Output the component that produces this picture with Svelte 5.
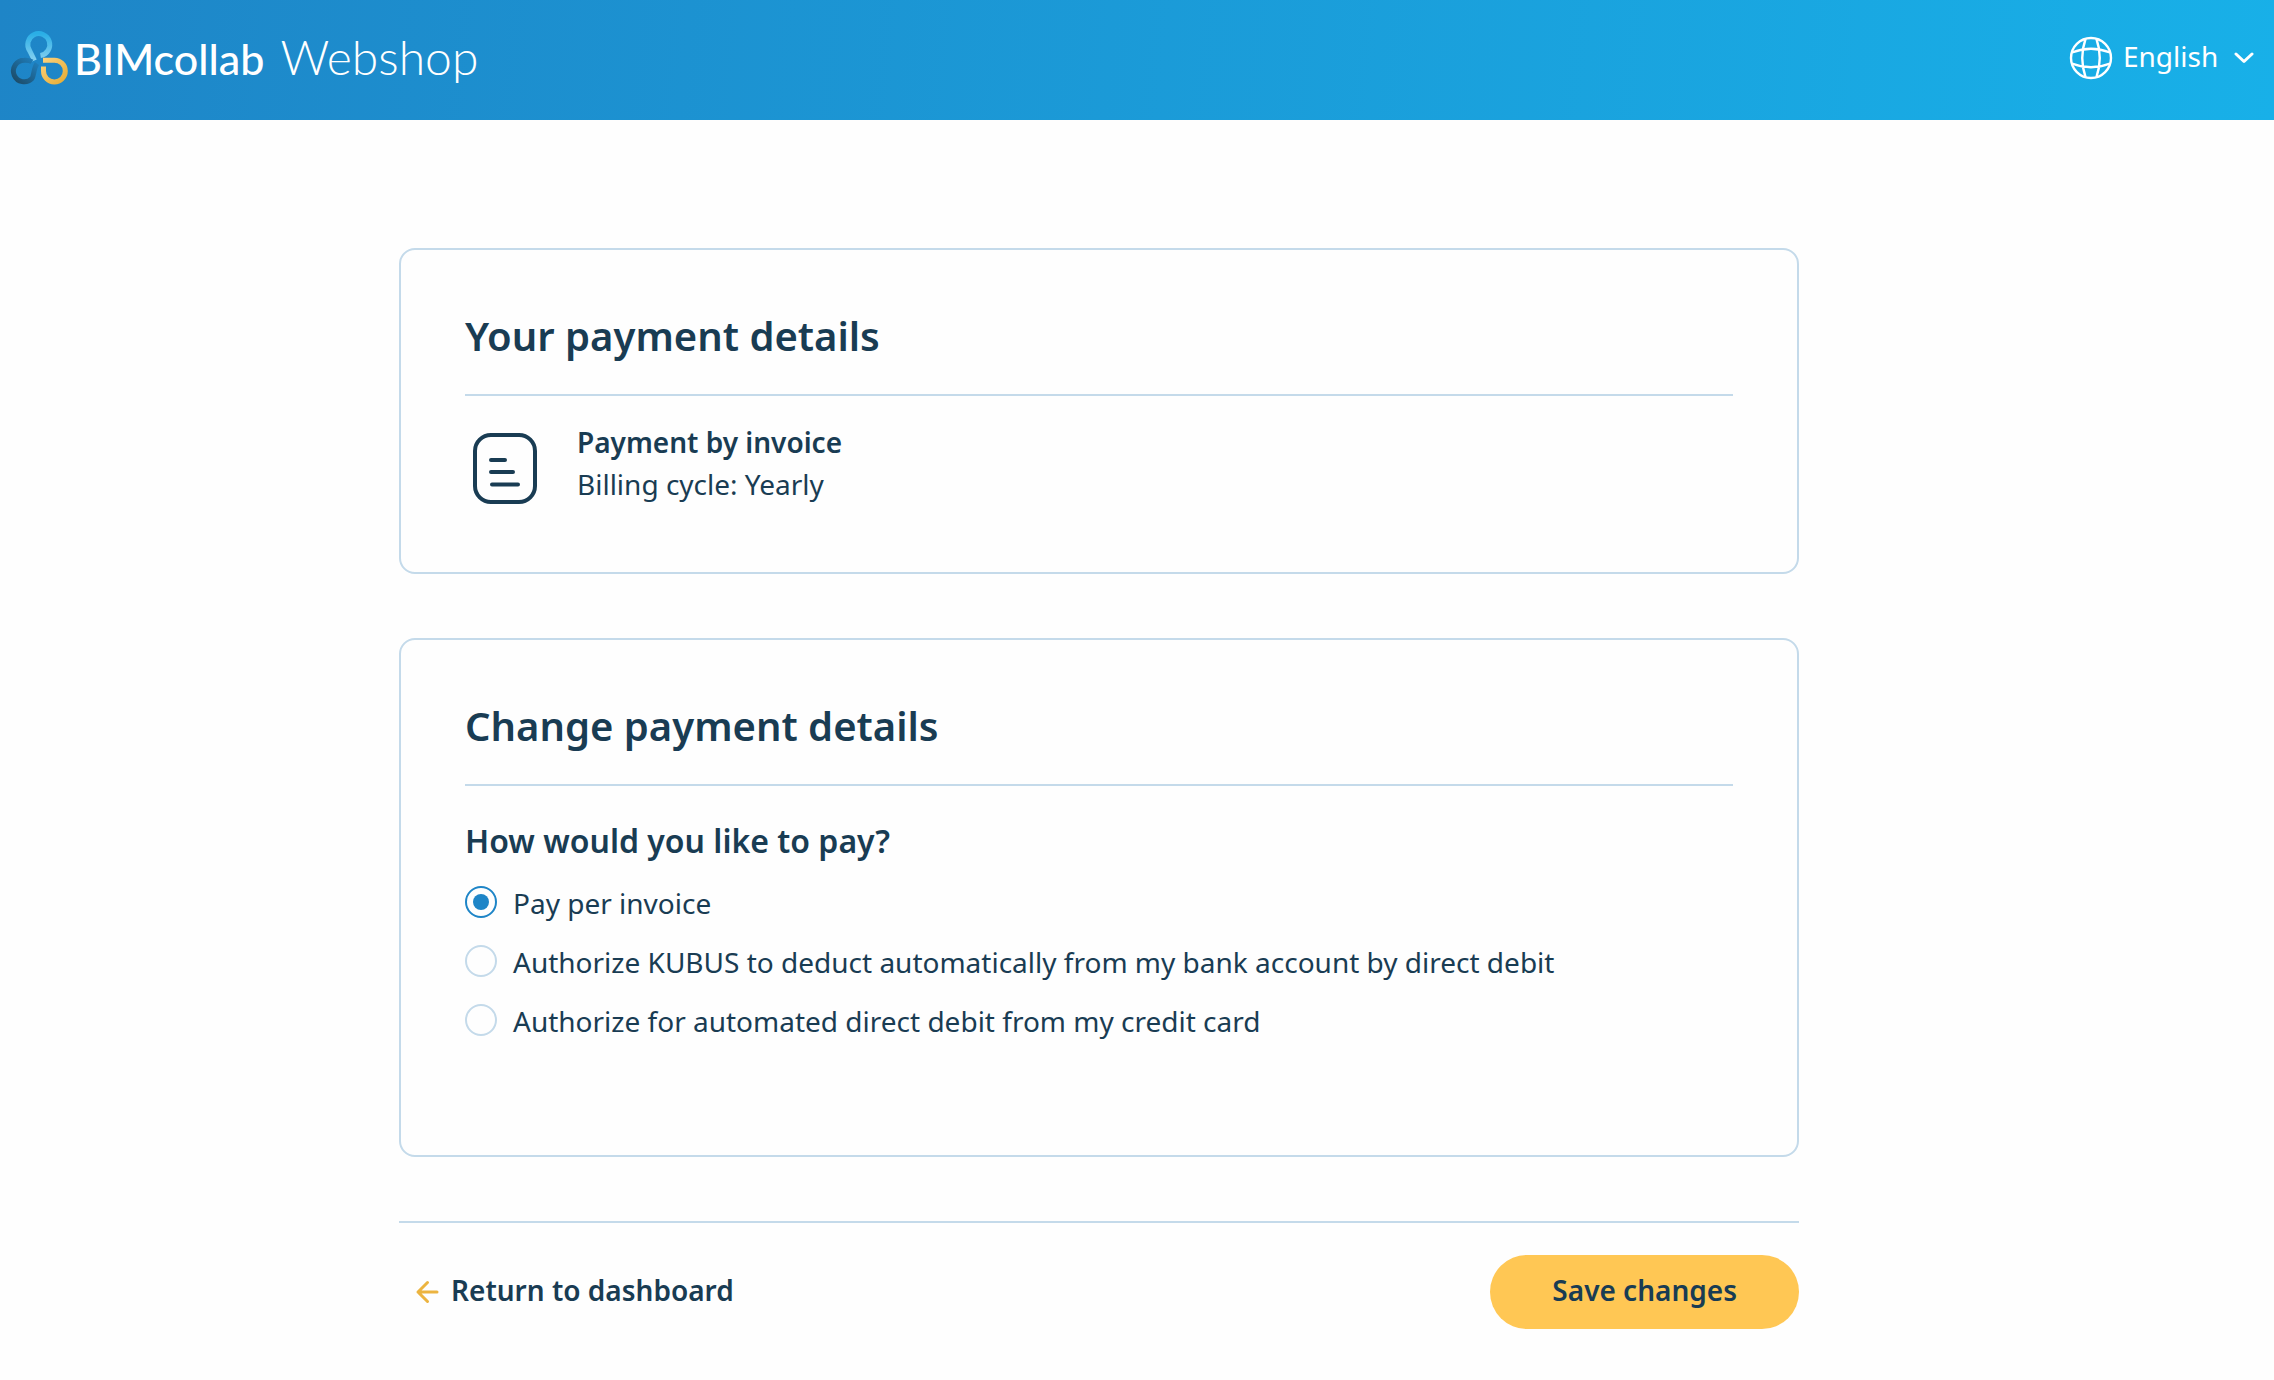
<script>
  const options = [
    { value: 'invoice', label: 'Pay per invoice' },
    {
      value: 'bank',
      label: 'Authorize KUBUS to deduct automatically from my bank account by direct debit'
    },
    { value: 'card', label: 'Authorize for automated direct debit from my credit card' }
  ];

  let method = $state('invoice');
  let language = $state('en');
</script>

<header class="topbar">
  <a class="brand" href="/">
    <svg class="mark" viewBox="10 28 60 58" aria-hidden="true">
      <defs>
        <linearGradient id="loop-top" x1="0" y1="0" x2="0" y2="1">
          <stop offset="0" stop-color="#2aaee6" />
          <stop offset="1" stop-color="#85d0f0" />
        </linearGradient>
        <linearGradient id="loop-left" x1="0" y1="1" x2="1" y2="0">
          <stop offset="0" stop-color="#1c4a66" />
          <stop offset="1" stop-color="#1f80bf" />
        </linearGradient>
        <linearGradient id="loop-right" x1="0" y1="0" x2="1" y2="1">
          <stop offset="0" stop-color="#fbd07a" />
          <stop offset="1" stop-color="#e6ad35" />
        </linearGradient>
      </defs>
      <path
        d="M34.5 59.5 L29.8 50 A11 11 0 1 1 40.5 54.5"
        stroke="url(#loop-top)"
      />
      <path
        d="M32 60.8 C30 59.4 27.5 59 24.3 59.2 A10.8 10.8 0 1 0 32 77.5 C34 75 33.5 67.5 37 62.5"
        stroke="url(#loop-left)"
      />
      <path
        d="M43 59.2 H54.3 A10.9 10.9 0 1 1 43.5 70 V65.5"
        stroke="url(#loop-right)"
      />
    </svg>
    <span class="name">BIMcollab</span>
    <span class="product">Webshop</span>
  </a>

  <div class="language">
    <svg class="globe" viewBox="0 0 44 44" aria-hidden="true">
      <circle cx="22" cy="22" r="20" />
      <path d="M16.5 3 Q10 22 16.5 41 M27.5 3 Q34 22 27.5 41 M3 16.5 Q22 9 41 16.5 M3 27.5 Q22 35 41 27.5" />
    </svg>
    <div class="picker">
      <select aria-label="Language" bind:value={language}>
        <option value="en">English</option>
      </select>
      <svg class="chevron" viewBox="0 0 20 12" aria-hidden="true">
        <path d="M2 2 L10 9.5 L18 2" />
      </svg>
    </div>
  </div>
</header>

<main class="page">
  <section class="card">
    <h1>Your payment details</h1>
    <div class="current">
      <svg class="invoice" viewBox="0 0 80 80" aria-hidden="true">
        <rect x="10" y="7" width="60" height="67" rx="16" />
        <path d="M26 32 H40 M26 44 H48 M27 56.5 H53" />
      </svg>
      <div>
        <p class="strong">Payment by invoice</p>
        <p>Billing cycle: Yearly</p>
      </div>
    </div>
  </section>

  <section class="card">
    <h1>Change payment details</h1>
    <fieldset>
      <legend>How would you like to pay?</legend>
      <div class="options">
        {#each options as option (option.value)}
          <label>
            <input type="radio" name="method" value={option.value} bind:group={method} />
            <span>{option.label}</span>
          </label>
        {/each}
      </div>
    </fieldset>
  </section>

  <footer class="actions">
    <a class="back" href="/dashboard">
      <svg viewBox="0 0 24 24" aria-hidden="true">
        <path d="M22 12 H3 M12.5 2.5 L3 12 L12.5 21.5" />
      </svg>
      Return to dashboard
    </a>
    <button type="button">Save changes</button>
  </footer>
</main>

<style>
  :global(body) {
    background: #fefefe;
    color: #193c53;
    font: 400 28px/42px 'Noto Sans', sans-serif;
  }

  h1,
  p,
  fieldset {
    margin: 0;
  }

  .topbar {
    display: flex;
    align-items: center;
    justify-content: space-between;
    height: 120px;
    padding: 0 20px 4px 10px;
    box-sizing: border-box;
    background: linear-gradient(96deg, #1e85c7, #18b0e8);
    color: #fff;
  }

  .brand {
    display: flex;
    align-items: baseline;
    color: inherit;
    font-family: Lato, sans-serif;
    line-height: 60px;
    text-decoration: none;
  }

  .mark {
    align-self: center;
    width: 60px;
    height: 58px;
    margin-right: 4px;
    fill: none;
    stroke-width: 5;
  }

  .name {
    margin-right: 16px;
    font-size: 43px;
    font-weight: 500;
  }

  .product {
    font-size: 48px;
    font-weight: 300;
  }

  .language {
    display: flex;
    align-items: center;
    gap: 10px;
  }

  .globe {
    width: 44px;
    height: 44px;
    fill: none;
    stroke: #fff;
    stroke-width: 2.4;
  }

  .picker {
    display: grid;
    align-items: center;
  }

  .picker > * {
    grid-area: 1 / 1;
  }

  select {
    padding: 0 35px 4px 0;
    border: 0;
    appearance: none;
    background: none;
    color: inherit;
    font: inherit;
  }

  .chevron {
    justify-self: end;
    width: 20px;
    height: 12px;
    fill: none;
    stroke: #fff;
    stroke-width: 3;
    stroke-linecap: round;
    stroke-linejoin: round;
    pointer-events: none;
  }

  .page {
    display: flex;
    flex-direction: column;
    gap: 64px;
    max-width: 1400px;
    margin: 0 auto;
    padding: 128px 76px 48px 0;
  }

  .card {
    padding: 64px;
    border: 2px solid #c4daea;
    border-radius: 16px;
  }

  h1 {
    padding-bottom: 36px;
    border-bottom: 2px solid #c4daea;
    font-size: 40px;
    font-weight: 600;
    line-height: 44px;
  }

  .current {
    display: flex;
    gap: 32px;
    padding-top: 24px;
  }

  .invoice {
    flex: none;
    width: 80px;
    height: 80px;
    margin-top: 8px;
    fill: none;
    stroke: #193c53;
    stroke-width: 4;
    stroke-linecap: round;
  }

  .strong {
    font-weight: 600;
    line-height: 44px;
  }

  .strong + p {
    line-height: 40px;
  }

  fieldset {
    min-width: 0;
    padding: 32px 0 48px;
    border: 0;
  }

  legend {
    float: left;
    width: 100%;
    padding: 0 0 18px;
    font-size: 32px;
    font-weight: 600;
    line-height: 46px;
  }

  .options {
    display: flex;
    flex-direction: column;
    gap: 16px;
    clear: both;
  }

  label {
    display: flex;
    gap: 16px;
    line-height: 43px;
  }

  input {
    display: grid;
    flex: none;
    place-items: center;
    box-sizing: border-box;
    width: 32px;
    height: 32px;
    margin: 4px 0 0;
    border: 2px solid #c4daea;
    border-radius: 50%;
    appearance: none;
  }

  input:checked {
    border-color: #1e85c7;
  }

  input:checked::before {
    width: 16px;
    height: 16px;
    border-radius: 50%;
    background: #1e85c7;
    content: '';
  }

  .actions {
    display: flex;
    align-items: center;
    justify-content: space-between;
    padding-top: 32px;
    border-top: 2px solid #c4daea;
    font-weight: 600;
  }

  .back {
    display: flex;
    gap: 12px;
    padding: 14px 16px 18px;
    color: inherit;
    text-decoration: none;
  }

  .back svg {
    width: 24px;
    height: 24px;
    margin-top: 11px;
    fill: none;
    stroke: #ecb440;
    stroke-width: 3;
    stroke-linecap: round;
    stroke-linejoin: round;
  }

  button {
    padding: 14px 62px 18px;
    border: 0;
    border-radius: 37px;
    background: #ffc754;
    color: inherit;
    font: inherit;
  }
</style>
